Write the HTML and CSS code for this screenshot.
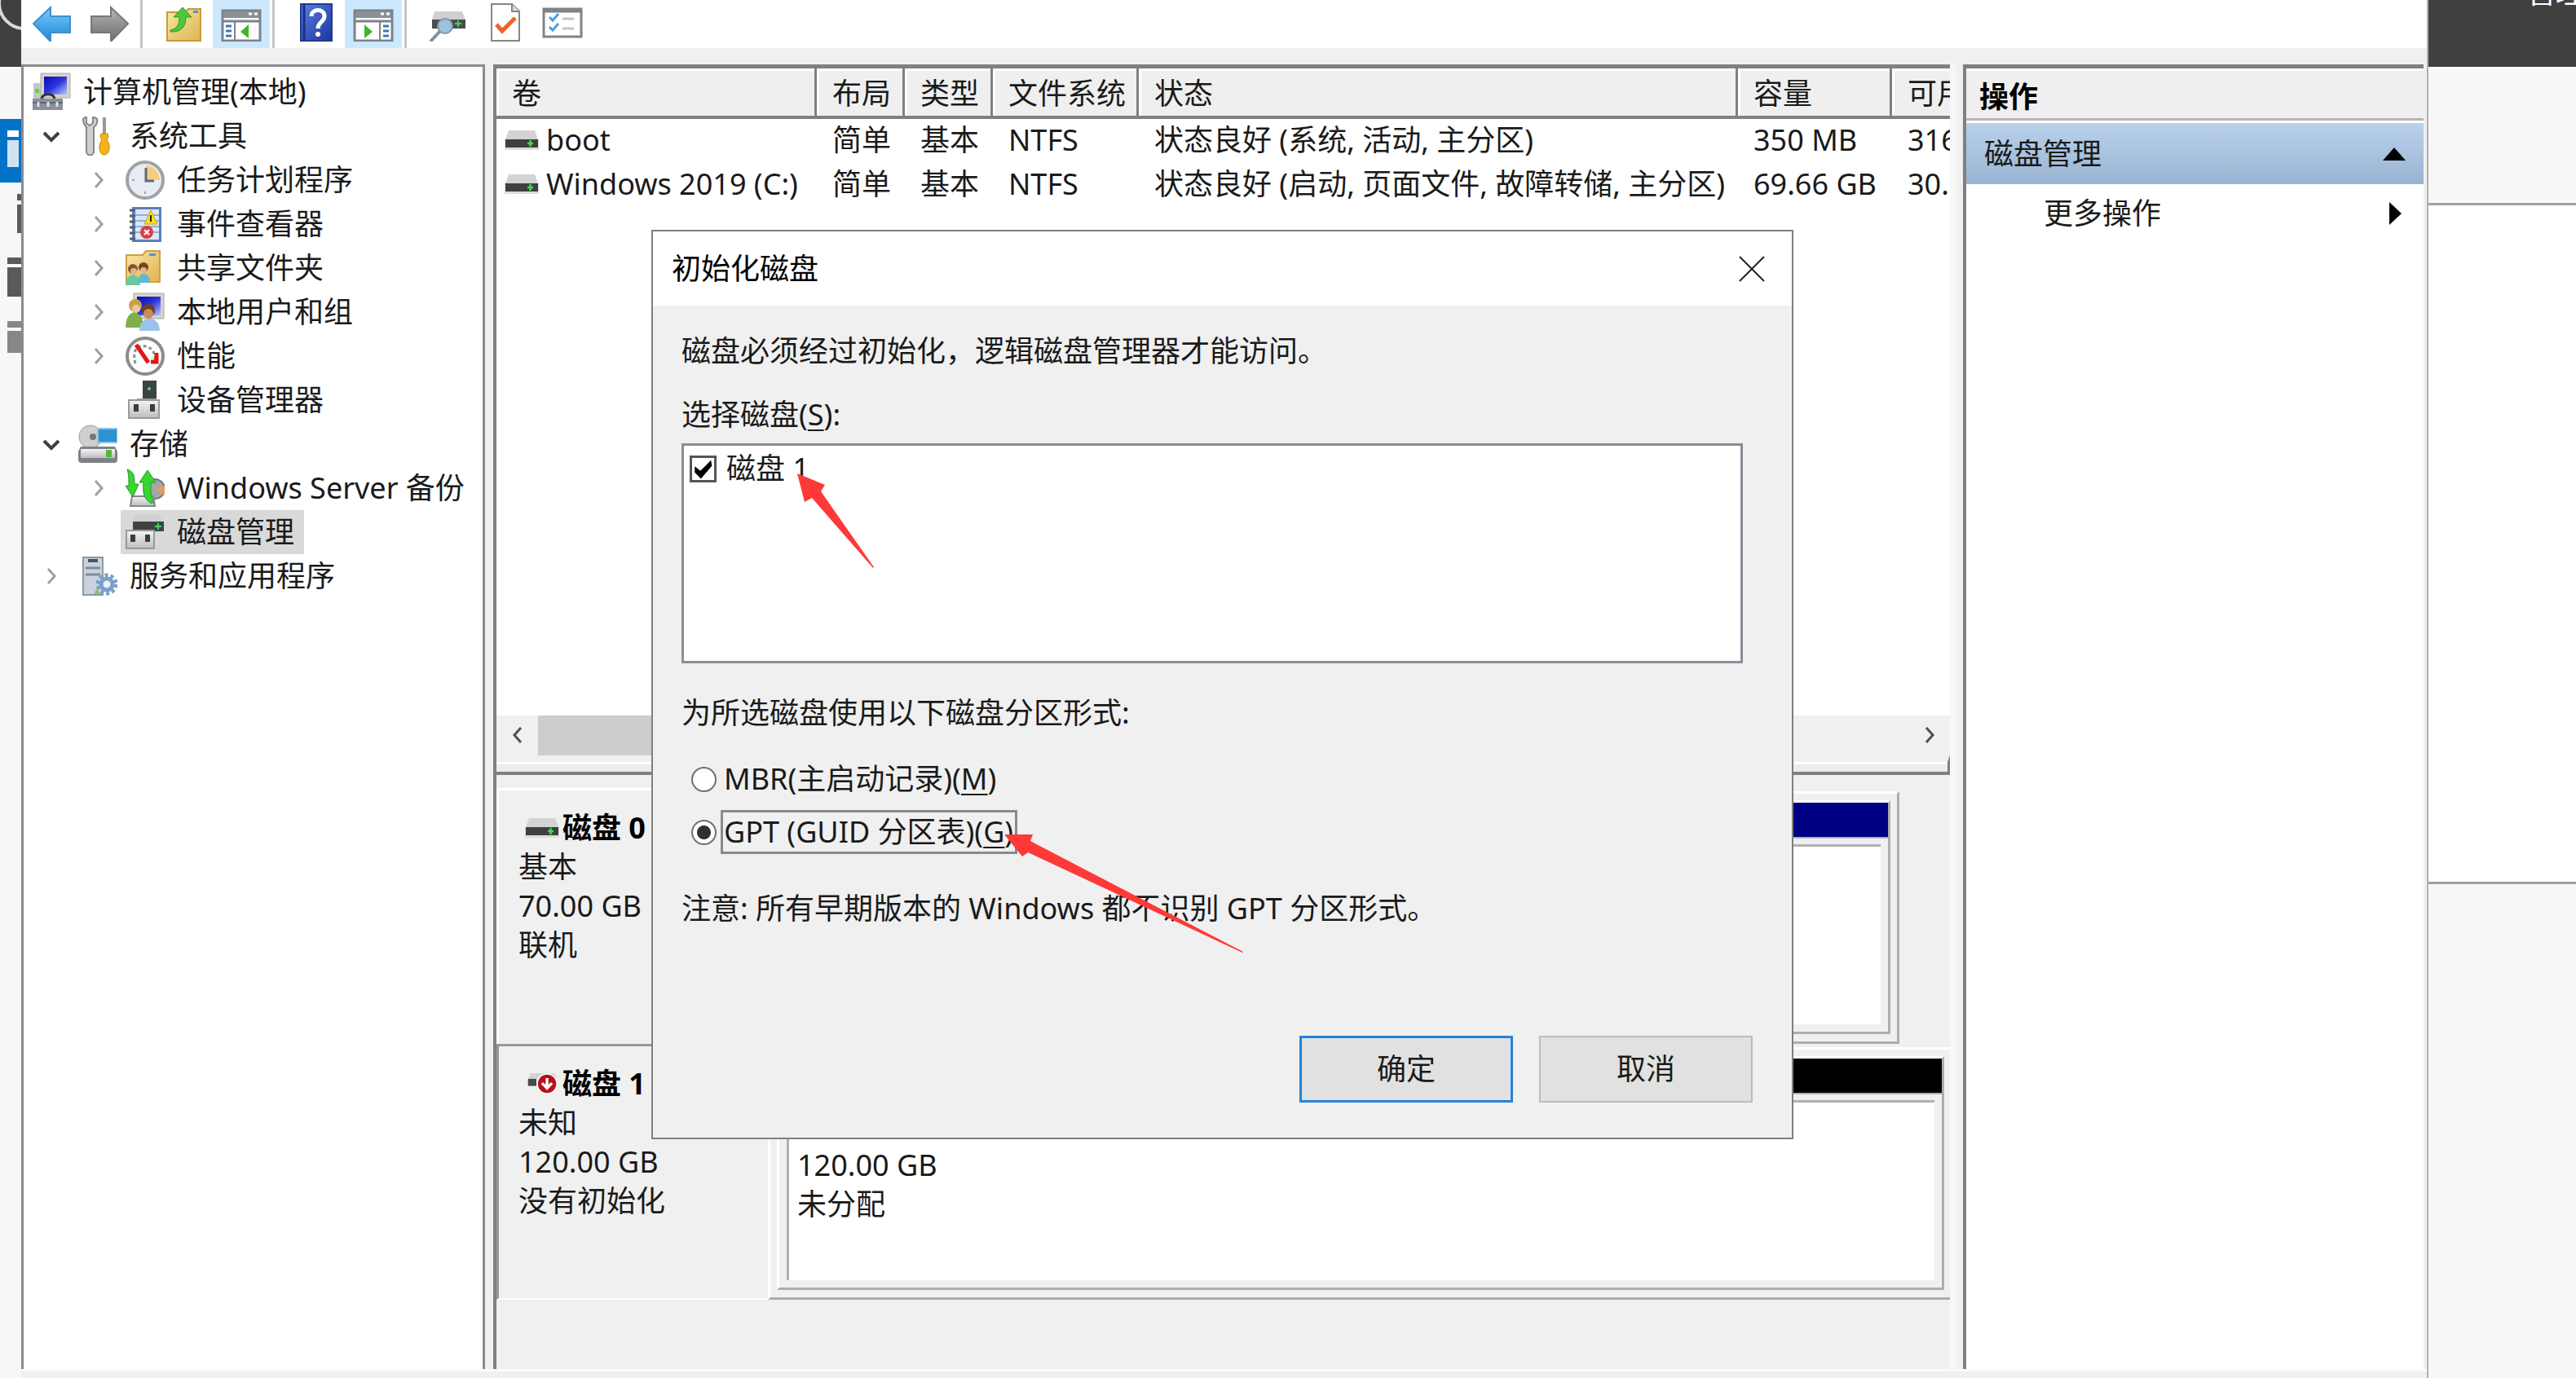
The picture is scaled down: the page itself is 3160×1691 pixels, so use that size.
FILE: index.html
```html
<!DOCTYPE html>

<html lang="zh-CN">
  <head>
    <meta charset="UTF-8" />
    <meta name="viewport" content="width=device-width, initial-scale=1.0" />

    <title>计算机管理</title>

    <link rel="stylesheet" href="styles.css">
  </head>

  <body>
    <!-- shared icons -->
    <svg class="defs" width="0" height="0">
      <defs>
        <linearGradient id="g-blue" x1="0" y1="0" x2="0" y2="1">
          <stop offset="0" stop-color="#7ccbfa" />
          <stop offset="1" stop-color="#1a86d9" />
        </linearGradient>
        <linearGradient id="g-gray" x1="0" y1="0" x2="0" y2="1">
          <stop offset="0" stop-color="#b5b5b5" />
          <stop offset="1" stop-color="#6d6d6d" />
        </linearGradient>
        <linearGradient id="g-metal" x1="0" y1="0" x2="0" y2="1">
          <stop offset="0" stop-color="#f4f4f4" />
          <stop offset="1" stop-color="#bdbdc2" />
        </linearGradient>
        <linearGradient id="g-folder" x1="0" y1="0" x2="1" y2="1">
          <stop offset="0" stop-color="#fbe8a4" />
          <stop offset="1" stop-color="#dfb252" />
        </linearGradient>
        <linearGradient id="g-screen" x1="0" y1="0" x2="1" y2="1">
          <stop offset="0" stop-color="#0a0ab8" />
          <stop offset="0.5" stop-color="#2a35dc" />
          <stop offset="1" stop-color="#b9c8ff" />
        </linearGradient>
        <linearGradient id="g-help" x1="0" y1="0" x2="1" y2="1">
          <stop offset="0" stop-color="#5b7fe0" />
          <stop offset="1" stop-color="#1c36a0" />
        </linearGradient>
      </defs>

      <symbol id="i-drive" viewBox="0 0 42 26">
        <path d="M5 1h32l4 11H1z" fill="#d3d3d6" />
        <path d="M0 12h42v13H0z" fill="#dcdcdc" />
        <path d="M1 12h40v10H1z" fill="#3f3f41" />
        <path d="M28 17h7M31.500 13v8" stroke="#3ddc4a" stroke-width="2.500" />
      </symbol>

      <symbol id="i-chevron" viewBox="0 0 24 24">
        <path d="M8 3l8 9-8 9" fill="none" stroke="currentColor" stroke-width="3" />
      </symbol>

      <symbol id="i-open" viewBox="0 0 24 24">
        <path d="M3 8l9 9 9-9" fill="none" stroke="currentColor" stroke-width="4" />
      </symbol>
    </svg>

    <div class="desktop">
      <!-- window behind, left edge -->
      <div class="behind-left">
        <div class="behind-bar">
          <svg width="26" height="81"><circle cx="30" cy="4" r="31" fill="none" stroke="#d8d8d8" stroke-width="4" /></svg>
        </div>
        <div class="behind-nav">
          <div class="behind-item active">
            <svg width="26" height="78"><path d="M9 14h14v8H9z" fill="#fff" /><path d="M9 26h14v33H9z" fill="#cfe2f2" /></svg>
          </div>
          <div class="behind-item">
            <svg width="26" height="78"><path d="M21 14h5v8h-5zM21 27h5v35h-5z" fill="#5a5a5a" /></svg>
          </div>
          <div class="behind-item">
            <svg width="26" height="78"><path d="M9 14h17v8H9zM9 26h17v36H9z" fill="#5a5a5a" /></svg>
          </div>
          <div class="behind-item">
            <svg width="26" height="78"><path d="M9 14h17v8H9zM9 26h17v27H9z" fill="#878787" /></svg>
          </div>
        </div>
      </div>

      <div class="window">
        <div class="toolbar">
          <button aria-label="后退">
            <svg width="50" height="50" viewBox="0 0 50 50"><path d="M2 28L23 8v11h24v20H23v11z" fill="url(#g-blue)" stroke="#3f8fc8" stroke-width="2" /></svg>
          </button>
          <button aria-label="前进">
            <svg width="50" height="50" viewBox="0 0 50 50"><path d="M48 28L27 8v11H3v20h24v11z" fill="url(#g-gray)" stroke="#777" stroke-width="2" /></svg>
          </button>
          <span class="sep"></span>
          <button aria-label="上移">
            <svg width="50" height="50" viewBox="0 0 50 50">
              <path d="M4 14h22l4-4h15v39H4z" fill="url(#g-folder)" stroke="#c79a3c" stroke-width="2" />
              <path d="M36 12h6v3h-6z" fill="#4a98d8" />
              <path d="M8 36c9-2 11-8 11-16h-7L23 8l11 12h-7c0 11-5 19-19 18z" fill="#4cc83a" stroke="#2f9c28" stroke-width="1" />
            </svg>
          </button>
          <button class="on" aria-label="显示/隐藏控制台树">
            <svg width="50" height="50" viewBox="0 0 50 50">
              <path d="M2 12h46v37H2z" fill="#fff" stroke="#7d8289" stroke-width="3" />
              <path d="M3 13h44v8H3z" fill="#8a9097" />
              <path d="M34 16h4M41 16h4" stroke="#fff" stroke-width="3" />
              <path d="M2 25h46" stroke="#7d8289" stroke-width="3" />
              <path d="M17 25v24" stroke="#7d8289" stroke-width="2" />
              <path d="M6 31h7M6 37h7M6 43h7" stroke="#3e78b4" stroke-width="3" />
              <path d="M34 29v17l-10-8z" fill="#3fb52c" />
            </svg>
          </button>
          <span class="sep"></span>
          <button aria-label="帮助">
            <svg width="50" height="50" viewBox="0 0 50 50">
              <path d="M6 4h38v45H6z" fill="url(#g-help)" stroke="#24398f" stroke-width="2" />
              <path d="M10 4v45" stroke="#1b2f86" stroke-width="3" />
              <path d="M19 19c0-10 16-10 16 0 0 7-8 7-8 15" fill="none" stroke="#fff" stroke-width="5" />
              <circle cx="27" cy="41" r="3" fill="#fff" />
            </svg>
          </button>
          <button class="on" aria-label="显示/隐藏操作窗格">
            <svg width="50" height="50" viewBox="0 0 50 50">
              <path d="M2 12h46v37H2z" fill="#fff" stroke="#7d8289" stroke-width="3" />
              <path d="M3 13h44v8H3z" fill="#8a9097" />
              <path d="M34 16h4M41 16h4" stroke="#fff" stroke-width="3" />
              <path d="M2 25h46" stroke="#7d8289" stroke-width="3" />
              <path d="M33 25v24" stroke="#7d8289" stroke-width="2" />
              <path d="M37 31h7M37 37h7M37 43h7" stroke="#3e78b4" stroke-width="3" />
              <path d="M14 29v17l10-8z" fill="#3fb52c" />
            </svg>
          </button>
          <span class="sep"></span>
          <button aria-label="重新扫描磁盘">
            <svg width="50" height="50" viewBox="0 0 50 50">
              <path d="M8 13h34l4 10H5z" fill="#cfcfd2" />
              <path d="M5 23h41v11H5z" fill="#4a4d50" />
              <path d="M33 28h8M37 24v8" stroke="#3ddc4a" stroke-width="2" />
              <path d="M15 37L3 50" stroke="#8b8f94" stroke-width="4" />
              <circle cx="21" cy="31" r="9" fill="#9cc3dd" stroke="#7e98aa" stroke-width="2" />
            </svg>
          </button>
          <button aria-label="属性">
            <svg width="50" height="50" viewBox="0 0 50 50">
              <path d="M8 4h25l9 9v36H8z" fill="#fff" stroke="#868686" stroke-width="2" />
              <path d="M33 4v9h9" fill="#ddd" stroke="#868686" stroke-width="2" />
              <path d="M14 29l7 8 16-16" fill="none" stroke="#f0622c" stroke-width="5" />
            </svg>
          </button>
          <button aria-label="设置">
            <svg width="50" height="50" viewBox="0 0 50 50">
              <path d="M2 10h46v34H2z" fill="#fff" stroke="#808487" stroke-width="3" />
              <path d="M2 12h46" stroke="#808487" stroke-width="5" />
              <path d="M9 20l4 4 7-8M9 32l4 4 7-8" fill="none" stroke="#4aa2e0" stroke-width="3" />
              <path d="M25 22h14M25 34h14" stroke="#c4c4c4" stroke-width="3" />
            </svg>
          </button>
        </div>

        <div class="panes">
          <ul class="tree">
            <li class="node">
              <svg class="icon" viewBox="0 0 48 48">
                <path d="M2 13h14v24H2z" fill="#c4c6ca" />
                <path d="M4 20h5v5H4z" fill="#6fd23e" />
                <path d="M11 1h36v30H11z" fill="#d6d3c8" stroke="#aaa99f" stroke-width="1" />
                <path d="M15 5h28v22H15z" fill="url(#g-screen)" />
                <path d="M12 32c2-7 14-7 16 0" fill="none" stroke="#333" stroke-width="3" />
                <path d="M1 32h37v14H1z" fill="#88919a" />
                <path d="M1 37h37" stroke="#5d6670" stroke-width="2" />
                <path d="M8 36v6M20 36v6M31 36v6" stroke="#dfe3e6" stroke-width="3" />
              </svg>
              <span>计算机管理(本地)</span>
            </li>
            <li class="node level-1">
              <svg class="arrow open"><use href="#i-open" /></svg>
              <svg class="icon" viewBox="0 0 48 48">
                <path d="M6 3c0 5 2 8 4 10v30c0 6 9 6 9 0V13c3-2 5-5 4-10l-5-3v8l-4 3-4-3V0z" fill="#d0d0d0" stroke="#868686" stroke-width="2" />
                <path d="M32 1v22" stroke="#999" stroke-width="4" />
                <path d="M28 21h8l1 4-2 4c5 5 4 18-3 18s-8-13-3-18l-2-4z" fill="#f2b416" stroke="#c98808" stroke-width="1" />
              </svg>
              <span>系统工具</span>
            </li>
            <li class="node level-2">
              <svg class="arrow"><use href="#i-chevron" /></svg>
              <svg class="icon" viewBox="0 0 48 48">
                <circle cx="24" cy="24" r="22" fill="#e7edf2" stroke="#a0a3a6" stroke-width="4" />
                <path d="M25 24V6a18 18 0 0 1 17 18z" fill="#f4cd84" />
                <path d="M25 9v16h10" fill="none" stroke="#5d6a78" stroke-width="3" />
                <path d="M8 24h3M24 38v3" stroke="#8fa4b8" stroke-width="2" />
              </svg>
              <span>任务计划程序</span>
            </li>
            <li class="node level-2">
              <svg class="arrow"><use href="#i-chevron" /></svg>
              <svg class="icon" viewBox="0 0 48 48">
                <path d="M8 3h36v43H8z" fill="#5c7fba" />
                <path d="M12 6h29v37H12z" fill="#dbe7f7" />
                <path d="M12 13h29M12 20h29M12 27h29M12 34h29" stroke="#96aed6" stroke-width="2" />
                <path d="M5 7h7M5 14h7M5 21h7M5 28h7M5 35h7M5 42h7" stroke="#555d6b" stroke-width="3" />
                <path d="M31 7l8 17H23z" fill="#f8de1e" stroke="#c9a400" stroke-width="1" />
                <path d="M31 13v8" stroke="#222" stroke-width="2" />
                <circle cx="26" cy="34" r="8" fill="#d8404a" />
                <path d="M23 31l6 6M29 31l-6 6" stroke="#fff" stroke-width="2" />
              </svg>
              <span>事件查看器</span>
            </li>
            <li class="node level-2">
              <svg class="arrow"><use href="#i-chevron" /></svg>
              <svg class="icon" viewBox="0 0 48 48">
                <path d="M1 8h20l4-5h17v38H1z" fill="url(#g-folder)" stroke="#cfa143" stroke-width="2" />
                <path d="M29 6h8v3h-8z" fill="#4a98d8" />
                <path d="M0 45c0-17 18-17 18 0z" fill="#6cc79c" />
                <path d="M15 42c0-15 15-15 15 0z" fill="#5fb9d0" />
                <circle cx="9" cy="25" r="6" fill="#84552f" />
                <circle cx="10" cy="28" r="4" fill="#e3b58a" />
                <circle cx="22" cy="23" r="6" fill="#70451f" />
                <circle cx="22" cy="27" r="4" fill="#e3b58a" />
              </svg>
              <span>共享文件夹</span>
            </li>
            <li class="node level-2">
              <svg class="arrow"><use href="#i-chevron" /></svg>
              <svg class="icon" viewBox="0 0 48 48">
                <path d="M10 1h37v31H10z" fill="#d6d3c8" stroke="#aaa99f" stroke-width="1" />
                <path d="M14 5h29v23H14z" fill="url(#g-screen)" />
                <path d="M0 43c0-25 22-25 22 0z" fill="#7fb04c" />
                <circle cx="12" cy="16" r="8" fill="#c7a24a" />
                <circle cx="13" cy="20" r="5" fill="#ecc79c" />
                <path d="M17 47c0-20 25-20 25 0z" fill="#9cc2ea" />
                <circle cx="28" cy="22" r="8" fill="#6b4126" />
                <circle cx="28" cy="26" r="6" fill="#c98c5c" />
              </svg>
              <span>本地用户和组</span>
            </li>
            <li class="node level-2">
              <svg class="arrow"><use href="#i-chevron" /></svg>
              <svg class="icon" viewBox="0 0 48 48">
                <circle cx="24" cy="24" r="22" fill="#fdfdfd" stroke="#8c8c8c" stroke-width="4" />
                <path d="M12 33c-5-20 6-23 13-21 9 2 12 10 11 19" fill="none" stroke="#7e9a83" stroke-width="3" stroke-dasharray="4 3" />
                <path d="M13 10l15 22M31 31h7V20" fill="none" stroke="#e01818" stroke-width="5" />
              </svg>
              <span>性能</span>
            </li>
            <li class="node level-2">
              <svg class="arrow"></svg>
              <svg class="icon" viewBox="0 0 48 48">
                <path d="M21 0h17v23H21z" fill="#3f4244" />
                <path d="M27 10h4M29 8v4" stroke="#3ddc4a" stroke-width="2" />
                <path d="M14 22h24v4H14z" fill="#9b9b9b" />
                <path d="M4 24h37v22H4z" fill="url(#g-metal)" stroke="#9a9a9a" stroke-width="2" />
                <path d="M10 29h6v9h-6zM30 29h6v9h-6z" fill="#3c3c3c" />
              </svg>
              <span>设备管理器</span>
            </li>
            <li class="node level-1">
              <svg class="arrow open"><use href="#i-open" /></svg>
              <svg class="icon" viewBox="0 0 48 48">
                <circle cx="15" cy="15" r="14" fill="#cdd0cd" stroke="#9d9d9d" stroke-width="1" />
                <circle cx="18" cy="15" r="4" fill="#777" />
                <path d="M24 5h24v17H24z" fill="#2f93cf" stroke="#87c7ea" stroke-width="2" />
                <path d="M3 27h42l3 6v10q0 4-4 4H4q-4 0-4-4V33z" fill="#7f8186" />
                <path d="M3 30h42v11H3z" fill="url(#g-metal)" />
                <path d="M34 31h7v9h-7z" fill="#55b83c" />
              </svg>
              <span>存储</span>
            </li>
            <li class="node level-2">
              <svg class="arrow"><use href="#i-chevron" /></svg>
              <svg class="icon" viewBox="0 0 48 48">
                <circle cx="36" cy="25" r="12" fill="#a4a6ab" stroke="#75777c" stroke-width="2" />
                <path d="M36 25l12-4v12z" fill="#e69a62" />
                <path d="M8 34h26l2 12H6z" fill="url(#g-metal)" stroke="#85878c" stroke-width="2" />
                <path d="M2 1c9 3 9 9 9 18h5L9 35 0 21h4C4 12 4 7 2 1z" fill="#38d430" stroke="#229b20" stroke-width="1" />
                <path d="M32 43c-10-5-11-14-10-26h-5L27 2l10 15h-6c0 9-1 16 4 24z" fill="#38d430" stroke="#229b20" stroke-width="1" />
              </svg>
              <span>Windows Server 备份</span>
            </li>
            <li class="node level-2">
              <svg class="arrow"></svg>
              <span class="picked">
                <svg class="icon" viewBox="0 0 48 48">
                  <path d="M13 3h28l6 9H8z" fill="#d0d0d3" />
                  <path d="M9 11h38v12H9z" fill="#3f4244" />
                  <path d="M36 17h8M40 13v8" stroke="#3ddc4a" stroke-width="2" />
                  <path d="M1 22h34v22H1z" fill="url(#g-metal)" stroke="#9a9a9a" stroke-width="2" />
                  <path d="M6 27h6v9H6zM24 27h6v9h-6z" fill="#3c3c3c" />
                </svg>
                <span>磁盘管理</span>
              </span>
            </li>
            <li class="node level-1">
              <svg class="arrow"><use href="#i-chevron" /></svg>
              <svg class="icon" viewBox="0 0 48 48">
                <path d="M6 1h24v46H6z" fill="#c9d3dd" stroke="#8c98a5" stroke-width="2" />
                <path d="M12 5h12" stroke="#48525d" stroke-width="4" />
                <path d="M9 14h18M9 22h18" stroke="#7e8a96" stroke-width="3" />
                <circle cx="35" cy="34" r="11" fill="none" stroke="#7d9fc8" stroke-width="5" stroke-dasharray="4 3" />
                <circle cx="35" cy="34" r="7" fill="#e8eff8" stroke="#7d9fc8" stroke-width="5" />
                <path d="M19 46l4-7 4 7z" fill="#7ccf56" />
              </svg>
              <span>服务和应用程序</span>
            </li>
          </ul>

          <div class="center">
            <div class="volumes">
              <div class="table-wrap">
                <table>
                  <colgroup>
                    <col class="c-name" />
                    <col class="c-short" />
                    <col class="c-short" />
                    <col class="c-fs" />
                    <col class="c-status" />
                    <col class="c-size" />
                    <col />
                  </colgroup>
                  <thead>
                    <tr>
                      <th>卷</th>
                      <th>布局</th>
                      <th>类型</th>
                      <th>文件系统</th>
                      <th>状态</th>
                      <th>容量</th>
                      <th>可用</th>
                    </tr>
                  </thead>
                  <tbody>
                    <tr>
                      <td class="name"><svg class="drive"><use href="#i-drive" /></svg>boot</td>
                      <td>简单</td>
                      <td>基本</td>
                      <td>NTFS</td>
                      <td>状态良好 (系统, 活动, 主分区)</td>
                      <td>350 MB</td>
                      <td>316</td>
                    </tr>
                    <tr>
                      <td class="name"><svg class="drive"><use href="#i-drive" /></svg>Windows 2019 (C:)</td>
                      <td>简单</td>
                      <td>基本</td>
                      <td>NTFS</td>
                      <td>状态良好 (启动, 页面文件, 故障转储, 主分区)</td>
                      <td>69.66 GB</td>
                      <td>30.</td>
                    </tr>
                  </tbody>
                </table>
              </div>
              <div class="scrollbar">
                <button aria-label="向左滚动"><svg class="flip"><use href="#i-chevron" /></svg></button>
                <div class="track"><div class="thumb"></div></div>
                <button aria-label="向右滚动"><svg><use href="#i-chevron" /></svg></button>
              </div>
              <div class="splitter"></div>
            </div>

            <div class="disks">
              <div class="disk">
                <div class="disk-info">
                  <h3><svg class="drive"><use href="#i-drive" /></svg>磁盘 0</h3>
                  <p>基本</p>
                  <p>70.00 GB</p>
                  <p>联机</p>
                </div>
                <div class="region primary">
                  <div class="region-frame">
                    <div class="stripe"></div>
                    <div class="region-body"></div>
                  </div>
                </div>
              </div>
              <div class="disk selected">
                <div class="disk-info">
                  <h3>
                    <svg class="drive" viewBox="0 0 42 30">
                      <path d="M5 0h34l3 8H1z" fill="#d3d3d6" />
                      <path d="M1 8h12v10H1z" fill="#4a4a4c" />
                      <circle cx="28" cy="15" r="15" fill="#fff" />
                      <circle cx="28" cy="15" r="13" fill="#b8101c" />
                      <path d="M28 7v13M21 14l7 7 7-7" fill="none" stroke="#fff" stroke-width="4" />
                    </svg>磁盘 1
                  </h3>
                  <p>未知</p>
                  <p>120.00 GB</p>
                  <p>没有初始化</p>
                </div>
                <div class="region">
                  <div class="region-frame">
                    <div class="stripe"></div>
                    <div class="region-body">
                      <p>120.00 GB</p>
                      <p>未分配</p>
                    </div>
                  </div>
                </div>
              </div>
            </div>
          </div>

          <div class="actions">
            <h2>操作</h2>
            <button class="group">
              <span>磁盘管理</span>
              <svg width="28" height="16"><path d="M0 16L14 0l14 16z" /></svg>
            </button>
            <button class="more">
              <span>更多操作</span>
              <svg width="28" height="28"><path d="M8 0l15 14L8 28z" /></svg>
            </button>
          </div>
        </div>

        <div class="statusbar"></div>
      </div>

      <!-- window behind, right edge -->
      <div class="behind-right">
        <div class="behind-bar"><span>管理</span></div>
        <div class="behind-head"></div>
        <div class="behind-content"></div>
        <div class="behind-foot"></div>
      </div>

      <div class="dialog" role="dialog" aria-labelledby="dialog-title">
        <div class="dialog-title">
          <span id="dialog-title">初始化磁盘</span>
          <button aria-label="关闭">
            <svg width="32" height="32"><path d="M1 1l30 30M31 1L1 31" stroke="#222" stroke-width="2" /></svg>
          </button>
        </div>
        <form class="dialog-body">
          <p class="intro">磁盘必须经过初始化，逻辑磁盘管理器才能访问。</p>
          <p class="list-label">选择磁盘(<u>S</u>):</p>
          <div class="disk-list">
            <input type="checkbox" id="disk1" checked />
            <label for="disk1">磁盘 1</label>
          </div>
          <p class="style-label">为所选磁盘使用以下磁盘分区形式:</p>
          <div class="option">
            <input type="radio" name="style" id="mbr" />
            <label for="mbr">MBR(主启动记录)(<u>M</u>)</label>
          </div>
          <div class="option">
            <input type="radio" name="style" id="gpt" checked />
            <label for="gpt" class="focus">GPT (GUID 分区表)(<u>G</u>)</label>
          </div>
          <p class="note">注意: 所有早期版本的 Windows 都不识别 GPT 分区形式。</p>
          <div class="buttons">
            <button type="button" class="default">确定</button>
            <button type="button">取消</button>
          </div>
        </form>

        <!-- pointer arrows over the dialog -->
        <svg class="marks" viewBox="800 282 1400 1116">
          <path d="M979 581l9 35 9-5 75 86 1-1-65-93 5-8z" />
          <path d="M1233 1024h35l-3 8 261 136-1 1-263-123-7 5z" />
        </svg>
      </div>
    </div>
  </body>
</html>
```
FILE: styles.css
```css
* {
  box-sizing: border-box;
}

html,
body {
  width: 100%;
  height: 100%;
  margin: 0;
  overflow: hidden;
}

body,
button,
input {
  font-family: "Noto Sans", "Noto Sans CJK SC", sans-serif;
  font-size: 36px;
  line-height: 48px;
  color: #1a1a1a;
}

p,
h2,
h3,
ul {
  margin: 0;
  padding: 0;
}

button {
  padding: 0;
  border: none;
  background: none;
}

.defs {
  position: absolute;
}

.desktop {
  position: relative;
  display: flex;
  height: 100%;
  background-color: #f7f7f7;
}

/* window behind */
.behind-left {
  width: 26px;
  overflow: hidden;
}

.behind-right {
  display: flex;
  flex-direction: column;
  width: 183px;
  border-left: 2px solid #b0b0b0;
  overflow: hidden;
}

.behind-bar {
  height: 82px;
  flex-shrink: 0;
  background-color: #404040;
  color: #fff;
  overflow: hidden;
}

.behind-bar span {
  display: block;
  margin: -33px 0 0 120px;
  white-space: nowrap;
}

.behind-nav {
  padding-top: 64px;
}

.behind-item {
  height: 78px;
}

.behind-item.active {
  background-color: #0173c7;
}

.behind-head {
  height: 167px;
}

.behind-content {
  flex: 834;
  border: 3px solid #a0a0a0;
  border-width: 3px 0;
  background-color: #fff;
}

.behind-foot {
  flex: 609;
}

/* console window */
.window {
  flex: 1;
  min-width: 0;
  display: flex;
  flex-direction: column;
  background-color: #f0f0f0;
}

.toolbar {
  display: flex;
  height: 59px;
  padding-left: 3px;
  background-color: #fff;
}

.toolbar button {
  display: flex;
  justify-content: center;
  width: 70px;
  height: 59px;
  padding-top: 1px;
}

.toolbar button.on {
  background-color: #cce8ff;
}

.toolbar .sep {
  width: 3px;
  margin: 0 16px 0 3px;
  background-color: #c6c6c6;
}

.panes {
  flex: 1;
  min-height: 0;
  display: flex;
  margin-top: 20px;
}

.statusbar {
  height: 11px;
  border-top: 3px solid #fafafa;
}

/* tree */
.tree {
  width: 569px;
  padding-top: 4px;
  border: 3px solid #8b8b90;
  border-bottom: none;
  background-color: #fff;
  list-style: none;
}

.node {
  display: flex;
  align-items: center;
  height: 54px;
  padding-left: 10px;
  white-space: nowrap;
}

.node.level-1 {
  padding-left: 22px;
}

.node.level-2 {
  padding-left: 80px;
}

.node .icon {
  width: 48px;
  height: 48px;
  margin-right: 15px;
  flex-shrink: 0;
}

.arrow {
  width: 24px;
  height: 24px;
  margin-right: 21px;
  color: #a0a0a0;
}

.arrow.open {
  color: #404040;
}

.picked {
  display: flex;
  align-items: center;
  height: 54px;
  margin-left: -6px;
  padding: 0 12px 0 6px;
  background-color: #d9d9d9;
}

/* volume list and disk map */
.center {
  flex: 1;
  min-width: 0;
  display: flex;
  flex-direction: column;
  margin: 0 8px 0 10px;
  border-left: 4px solid #808080;
  border-right: 8px solid #f7f7f7;
}

.volumes {
  flex: 879;
  display: flex;
  flex-direction: column;
  border-top: 5px solid #808080;
  background-color: #fff;
}

.table-wrap {
  flex: 1;
  overflow: hidden;
}

table {
  width: 100%;
  table-layout: fixed;
  border-spacing: 0;
}

.c-name {
  width: 393px;
}

.c-short {
  width: 108px;
}

.c-fs {
  width: 179px;
}

.c-status {
  width: 735px;
}

.c-size {
  width: 189px;
}

th,
td {
  padding: 0 0 0 19px;
  text-align: left;
  font-weight: 400;
  white-space: nowrap;
  overflow: hidden;
}

th {
  height: 62px;
  padding-top: 4px;
  border-right: 3px solid #808080;
  border-bottom: 4px solid #808080;
  background-color: #efefef;
  box-shadow: inset 3px 3px #fff;
}

th:last-child {
  border-right: none;
}

td {
  height: 54px;
  padding-bottom: 2px;
}

td.name {
  padding-left: 10px;
}

.drive {
  width: 42px;
  height: 26px;
  margin-right: 9px;
}

.scrollbar {
  display: flex;
  height: 49px;
  background-color: #f0f0f0;
}

.scrollbar button {
  display: flex;
  align-items: center;
  justify-content: center;
  width: 51px;
}

.scrollbar svg {
  width: 24px;
  height: 24px;
  color: #505050;
}

.scrollbar .flip {
  transform: scaleX(-1);
}

.track {
  flex: 1;
}

.thumb {
  width: 50%;
  height: 49px;
  background-color: #cdcdcd;
}

.splitter {
  height: 24px;
  border-top: 8px solid #f0f0f0;
  border-right: 3px solid #808080;
  border-bottom: 4px solid #808080;
  background-color: #ececec;
  box-shadow: inset 0 3px #fff;
}

.disks {
  flex: 723;
  padding-top: 16px;
}

.disk {
  display: flex;
  height: 314px;
}

.disk-info {
  width: 333px;
  padding: 22px 0 0 24px;
  border-top: 3px solid #fff;
  border-left: 3px solid #fff;
}

.disk.selected .disk-info {
  border-color: #989898;
  border-bottom: 2px solid #fff;
}

h3 {
  padding-left: 8px;
  font-size: 36px;
  font-weight: 700;
  color: #000;
}

h3 .drive {
  margin-right: 4px;
}

.region {
  flex: 1;
  display: flex;
  margin-top: 4px;
  padding: 8px 8px 9px 8px;
  border: 3px solid #fff;
  border-bottom-color: #adadad;
}

.region.primary {
  margin-right: 62px;
  border-right-color: #adadad;
}

.region:not(.primary) {
  padding-right: 7px;
  border-right: none;
}

.region-frame {
  flex: 1;
  display: flex;
  flex-direction: column;
  border: 3px solid #fff;
  border-right-color: #adadad;
  border-bottom-color: #adadad;
}

.stripe {
  height: 44px;
  border-bottom: 2px solid #b0b0b0;
  background-color: #000;
}

.primary .stripe {
  background-color: #000084;
}

.region-body {
  flex: 1;
  margin: 7px 9px 9px;
  padding: 53px 0 0 10px;
  border-top: 3px solid #b0b0b0;
  border-left: 3px solid #b0b0b0;
  background-color: #fff;
}

/* actions */
.actions {
  display: flex;
  flex-direction: column;
  width: 565px;
  margin-right: 4px;
  border-top: 5px solid #808080;
  border-left: 4px solid #808080;
  background-color: #fff;
}

.actions h2 {
  height: 64px;
  padding: 8px 0 0 16px;
  border-top: 3px solid #fff;
  border-bottom: 3px solid #b8b4b0;
  background-color: #efefef;
  font-size: 36px;
  font-weight: 700;
  color: #000;
}

.actions button {
  display: flex;
  align-items: center;
  justify-content: space-between;
  padding-right: 22px;
}

.actions .group {
  height: 75px;
  margin-top: 3px;
  padding-left: 22px;
  background-image: linear-gradient(#b9d1ea, #99b4d3);
}

.actions .more {
  height: 72px;
  padding-left: 95px;
}

/* dialog */
.dialog {
  position: absolute;
  top: 282px;
  left: 799px;
  width: 1401px;
  border: 2px solid #7f7f7f;
  background-color: #f0f0f0;
}

.dialog-title {
  display: flex;
  align-items: center;
  justify-content: space-between;
  height: 91px;
  padding: 0 33px 0 23px;
  background-color: #fff;
  color: #000;
}

.dialog-title button {
  display: flex;
}

.dialog-body {
  padding: 32px 48px 43px 35px;
}

.list-label {
  padding-top: 30px;
}

.disk-list {
  display: flex;
  align-items: flex-start;
  height: 270px;
  margin: 11px 12px 0 0;
  padding: 4px 7px;
  border: 3px solid #8b8e98;
  background-color: #fff;
}

.style-label {
  padding-top: 37px;
  margin-bottom: 30px;
}

.option {
  display: flex;
  align-items: center;
  margin-bottom: 11px;
  padding-left: 12px;
}

.option label {
  padding: 0 2px 0 1px;
  border: 3px solid transparent;
}

.option label.focus {
  border-color: #8a8a8a;
}

u {
  text-decoration-thickness: 2px;
  text-underline-offset: 5px;
}

input[type="checkbox"] {
  appearance: none;
  width: 33px;
  height: 33px;
  margin: 8px 12px 0 0;
  border: 3px solid #555;
  background-color: #fff;
}

input[type="checkbox"]:checked::before {
  content: "";
  display: block;
  width: 27px;
  height: 27px;
  background-color: #000;
  clip-path: polygon(12% 38%, 38% 58%, 86% 10%, 90% 36%, 40% 94%, 12% 66%);
}

input[type="radio"] {
  appearance: none;
  width: 31px;
  height: 31px;
  margin: 0 5px 0 0;
  border: 2px solid #707070;
  border-radius: 50%;
  background-color: #fff;
}

input[type="radio"]:checked {
  background-image: radial-gradient(circle, #303030 8px, transparent 9px);
}

.note {
  padding-top: 32px;
}

.buttons {
  display: flex;
  justify-content: flex-end;
  gap: 32px;
  margin-top: 132px;
}

.buttons button {
  width: 262px;
  height: 82px;
  border: 2px solid #bcbcbc;
  background-color: #e1e1e1;
}

.buttons button.default {
  border: 3px solid #2383d8;
}

.marks {
  position: absolute;
  top: -2px;
  left: -2px;
  width: 1400px;
  height: 1116px;
  fill: #ff3838;
  pointer-events: none;
}
```
